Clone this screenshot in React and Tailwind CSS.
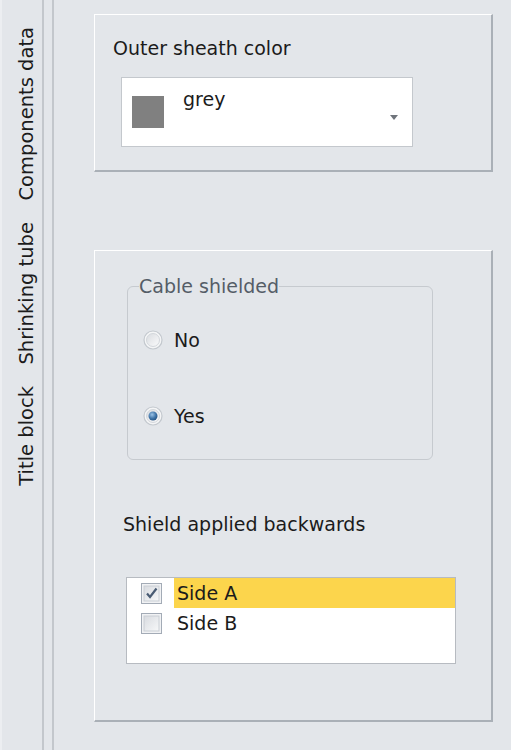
const tabs = ["Components data", "Shrinking tube", "Title block"];

const Radio = ({ checked }) => (
  <svg width="20" height="20" viewBox="0 0 20 20">
    <defs>
      <linearGradient id="rbg" x1="0" y1="0" x2="1" y2="1">
        <stop offset="0" stopColor="#d9dce0" />
        <stop offset="1" stopColor="#fbfbfc" />
      </linearGradient>
      <radialGradient id="rdot" cx="0.4" cy="0.35" r="0.7">
        <stop offset="0" stopColor="#9cc3e6" />
        <stop offset="0.6" stopColor="#3f74a8" />
        <stop offset="1" stopColor="#24507f" />
      </radialGradient>
    </defs>
    <circle cx="10" cy="10" r="9" fill="#f4f5f6" stroke="#c3c8ce" strokeWidth="1.2" />
    <circle cx="10" cy="10" r="6.5" fill="url(#rbg)" stroke="#d3d7dc" strokeWidth="1" />
    {checked && <circle cx="10" cy="10" r="4.5" fill="url(#rdot)" />}
  </svg>
);

const Check = ({ checked }) => (
  <svg width="21" height="21" viewBox="0 0 21 21">
    <defs>
      <linearGradient id="cbg" x1="0" y1="0" x2="1" y2="1">
        <stop offset="0" stopColor="#d8dbe0" />
        <stop offset="1" stopColor="#f7f8f9" />
      </linearGradient>
    </defs>
    <rect x="0.5" y="0.5" width="20" height="20" fill="#f1f2f4" stroke="#a3abb6" />
    <rect x="3" y="3" width="15" height="15" fill="url(#cbg)" stroke="#c9ced4" />
    {checked && (
      <path d="M6 10.5 L9 14 L15.5 5.5" fill="none" stroke="#4a5c74" strokeWidth="2.2" />
    )}
  </svg>
);

export default function App() {
  return (
    <div className="flex h-[750px] w-[511px] overflow-hidden bg-[#e3e6ea] font-['DejaVu_Sans',sans-serif] text-[19px] leading-[24px] text-[#1b1b1b]">
      {/* vertical tabs */}
      <div className="w-[2px] bg-[#eceef1]" />
      <div className="flex w-[40px] flex-col items-center pt-[27px] pl-[9px] text-[19.5px]">
        <div className="rotate-180 whitespace-nowrap [writing-mode:vertical-rl]">{tabs[0]}</div>
        <div className="mt-[21px] rotate-180 whitespace-nowrap [writing-mode:vertical-rl]">{tabs[1]}</div>
        <div className="mt-[22px] rotate-180 whitespace-nowrap [writing-mode:vertical-rl]">{tabs[2]}</div>
      </div>
      <div className="w-[2px] bg-[#c3c7cc]" />
      <div className="w-[8px]" />
      <div className="w-[2px] bg-[#c3c7cc]" />

      <div className="flex flex-1 flex-col pl-[40px]">
        {/* outer sheath panel */}
        <div className="mt-[14px] h-[158px] w-[399px] border-t border-l border-r-2 border-b-2 border-t-white border-l-white border-r-[#aab0b7] border-b-[#aab0b7] pl-[18px] pt-[21px]">
          <div>Outer sheath color</div>
          <div className="ml-[8px] mt-[17px] flex h-[70px] w-[292px] items-center border border-[#c4c8cd] bg-white pl-[10px] pr-[14px]">
            <div className="h-[32px] w-[32px] bg-[#808080]" />
            <div className="ml-[19px] self-start pt-[9px]">grey</div>
            <svg className="ml-auto mt-[10px]" width="8" height="5" viewBox="0 0 8 5">
              <path d="M0 0 H8 L4 5 Z" fill="#6f747b" />
            </svg>
          </div>
        </div>

        {/* shield panel */}
        <div className="mt-[78px] h-[472px] w-[399px] border-t border-l border-r-2 border-b-2 border-t-white border-l-white border-r-[#aab0b7] border-b-[#aab0b7] pt-[24px]">
          <fieldset className="ml-[32px] w-[306px] rounded-[6px] border border-[#c6cacf] px-0 pb-[31px]">
            <legend className="ml-[11px] px-0 leading-[22px] text-[#555d67]">Cable shielded</legend>
            <div className="mt-[31px] flex items-center gap-[11px] pl-[15px]">
              <Radio />
              <span>No</span>
            </div>
            <div className="mt-[52px] flex items-center gap-[11px] pl-[15px]">
              <Radio checked />
              <span>Yes</span>
            </div>
          </fieldset>

          <div className="ml-[28px] mt-[52px]">Shield applied backwards</div>

          <div className="ml-[31px] mt-[41px] h-[87px] w-[330px] border border-[#b7bbc1] bg-white">
            <div className="flex h-[30px] items-center">
              <div className="flex w-[47px] items-center pl-[14px]">
                <Check checked />
              </div>
              <div className="flex h-full flex-1 items-center bg-[#fcd54c] pl-[3px]">Side A</div>
            </div>
            <div className="flex h-[30px] items-center">
              <div className="flex w-[47px] items-center pl-[14px]">
                <Check />
              </div>
              <div className="pl-[3px]">Side B</div>
            </div>
          </div>
        </div>
      </div>
    </div>
  );
}
